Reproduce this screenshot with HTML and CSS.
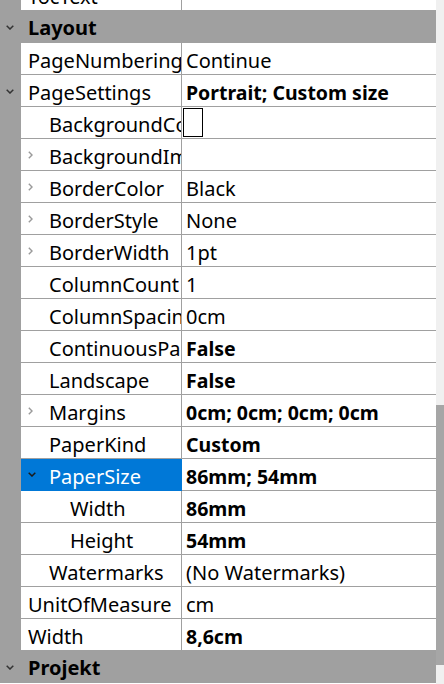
FILE: index.html
```html
<!DOCTYPE html>
<html>
<head>
<meta charset="utf-8">
<link rel="stylesheet" href="styles.css">
</head>
<body>
<div class="window">
  <div class="grid">
    <div class="rows">
      <div class="row"><div class="gutter"></div><div class="name l0"><span class="label">TocText</span></div><div class="value"></div></div>

      <div class="cat"><div class="gutter"><svg class="down" width="8" height="5" viewBox="0 0 8 5"><path d="M0.7 0.7 L4 4 L7.3 0.7" fill="none" stroke="#333" stroke-width="1.5"/></svg></div><span class="cat-label">Layout</span></div>

      <div class="row"><div class="gutter"></div><div class="name l0"><span class="label">PageNumbering</span></div><div class="value">Continue</div></div>
      <div class="row"><div class="gutter"><svg class="down" width="8" height="5" viewBox="0 0 8 5"><path d="M0.7 0.7 L4 4 L7.3 0.7" fill="none" stroke="#333" stroke-width="1.5"/></svg></div><div class="name l0"><span class="label">PageSettings</span></div><div class="value b">Portrait; Custom size</div></div>

      <div class="row"><div class="gutter"></div><div class="name"><span class="tw"></span><span class="label">BackgroundColor</span></div><div class="value"><span class="swatch"></span></div></div>
      <div class="row"><div class="gutter"></div><div class="name"><span class="tw"><svg width="5" height="8" viewBox="0 0 5 8"><path d="M0.8 0.8 L4 4 L0.8 7.2" fill="none" stroke="#9a9a9a" stroke-width="1.4"/></svg></span><span class="label">BackgroundImage</span></div><div class="value"></div></div>
      <div class="row"><div class="gutter"></div><div class="name"><span class="tw"><svg width="5" height="8" viewBox="0 0 5 8"><path d="M0.8 0.8 L4 4 L0.8 7.2" fill="none" stroke="#9a9a9a" stroke-width="1.4"/></svg></span><span class="label">BorderColor</span></div><div class="value">Black</div></div>
      <div class="row"><div class="gutter"></div><div class="name"><span class="tw"><svg width="5" height="8" viewBox="0 0 5 8"><path d="M0.8 0.8 L4 4 L0.8 7.2" fill="none" stroke="#9a9a9a" stroke-width="1.4"/></svg></span><span class="label">BorderStyle</span></div><div class="value">None</div></div>
      <div class="row"><div class="gutter"></div><div class="name"><span class="tw"><svg width="5" height="8" viewBox="0 0 5 8"><path d="M0.8 0.8 L4 4 L0.8 7.2" fill="none" stroke="#9a9a9a" stroke-width="1.4"/></svg></span><span class="label">BorderWidth</span></div><div class="value">1pt</div></div>
      <div class="row"><div class="gutter"></div><div class="name"><span class="tw"></span><span class="label">ColumnCount</span></div><div class="value">1</div></div>
      <div class="row"><div class="gutter"></div><div class="name"><span class="tw"></span><span class="label">ColumnSpacing</span></div><div class="value">0cm</div></div>
      <div class="row"><div class="gutter"></div><div class="name"><span class="tw"></span><span class="label">ContinuousPaging</span></div><div class="value b">False</div></div>
      <div class="row"><div class="gutter"></div><div class="name"><span class="tw"></span><span class="label">Landscape</span></div><div class="value b">False</div></div>
      <div class="row"><div class="gutter"></div><div class="name"><span class="tw"><svg width="5" height="8" viewBox="0 0 5 8"><path d="M0.8 0.8 L4 4 L0.8 7.2" fill="none" stroke="#9a9a9a" stroke-width="1.4"/></svg></span><span class="label">Margins</span></div><div class="value b">0cm; 0cm; 0cm; 0cm</div></div>
      <div class="row"><div class="gutter"></div><div class="name"><span class="tw"></span><span class="label">PaperKind</span></div><div class="value b">Custom</div></div>
      <div class="row selected"><div class="gutter"></div><div class="name"><span class="tw"><svg width="8" height="5" viewBox="0 0 8 5"><path d="M0.7 0.7 L4 4 L7.3 0.7" fill="none" stroke="#1a1a1a" stroke-width="1.5"/></svg></span><span class="label">PaperSize</span></div><div class="value b">86mm; 54mm</div></div>
      <div class="row"><div class="gutter"></div><div class="name"><span class="tw"></span><span class="tw"></span><span class="label">Width</span></div><div class="value b">86mm</div></div>
      <div class="row"><div class="gutter"></div><div class="name"><span class="tw"></span><span class="tw"></span><span class="label">Height</span></div><div class="value b">54mm</div></div>
      <div class="row"><div class="gutter"></div><div class="name"><span class="tw"></span><span class="label">Watermarks</span></div><div class="value">(No Watermarks)</div></div>
      <div class="row"><div class="gutter"></div><div class="name l0"><span class="label">UnitOfMeasure</span></div><div class="value">cm</div></div>
      <div class="row"><div class="gutter"></div><div class="name l0"><span class="label">Width</span></div><div class="value b">8,6cm</div></div>

      <div class="cat"><div class="gutter"><svg class="down" width="8" height="5" viewBox="0 0 8 5"><path d="M0.7 0.7 L4 4 L7.3 0.7" fill="none" stroke="#333" stroke-width="1.5"/></svg></div><span class="cat-label">Projekt</span></div>
    </div>
  </div>
  <div class="scrollbar"><div class="thumb"></div></div>
</div>
</body>
</html>
```

FILE: styles.css
```css
html, body {
  margin: 0;
  padding: 0;
  background: #ffffff;
}

.window {
  display: flex;
  width: 444px;
  height: 684px;
  overflow: hidden;
  font-family: "Noto Sans", "Open Sans", sans-serif;
  font-size: 20px;
  color: #000;
}

.grid {
  width: 436px;
  height: 684px;
  overflow: hidden;
  background: #fff;
}

.rows {
  margin-top: -21px;
  display: flex;
  flex-direction: column;
}

.row {
  display: flex;
  height: 32px;
}

.gutter {
  width: 21px;
  flex: none;
  background: #a0a0a0;
  display: flex;
  align-items: center;
  justify-content: center;
  padding-right: 1px;
  box-sizing: border-box;
}

.name {
  width: 161px;
  flex: none;
  box-sizing: border-box;
  border-bottom: 1px solid #a0a0a0;
  border-right: 1px solid #a0a0a0;
  padding: 2px 0 0 7px;
  display: flex;
  align-items: flex-start;
  overflow: hidden;
  white-space: nowrap;
  line-height: 31px;
}

.tw {
  width: 21px;
  flex: none;
  display: flex;
  align-items: center;
  height: 31px;
  margin-top: -2px;
}

.label {
  white-space: nowrap;
}

.value {
  flex: 1;
  box-sizing: border-box;
  border-bottom: 1px solid #a0a0a0;
  padding: 2px 0 0 4px;
  line-height: 31px;
  white-space: nowrap;
  overflow: hidden;
  display: flex;
  align-items: flex-start;
}

.b {
  font-weight: 700;
  font-size: 19.5px;
}

.swatch {
  display: block;
  width: 20px;
  height: 29px;
  margin: -1px 0 0 -3px;
  box-sizing: border-box;
  border: 1px solid #000;
  background: #fff;
}

.selected .name {
  background: #0078d7;
  color: #fff;
  border-right-color: #0078d7;
  border-bottom-color: #0078d7;
}

.cat {
  display: flex;
  height: 32px;
  background: #a0a0a0;
  align-items: stretch;
}

.cat-label {
  padding: 2px 0 0 7px;
  font-weight: 700;
  line-height: 30px;
}

.scrollbar {
  width: 8px;
  flex: none;
  height: 684px;
  background: #f0f0f0;
  padding-top: 405px;
  box-sizing: border-box;
}

.thumb {
  height: 260px;
  background: #a6a6a6;
}
```
